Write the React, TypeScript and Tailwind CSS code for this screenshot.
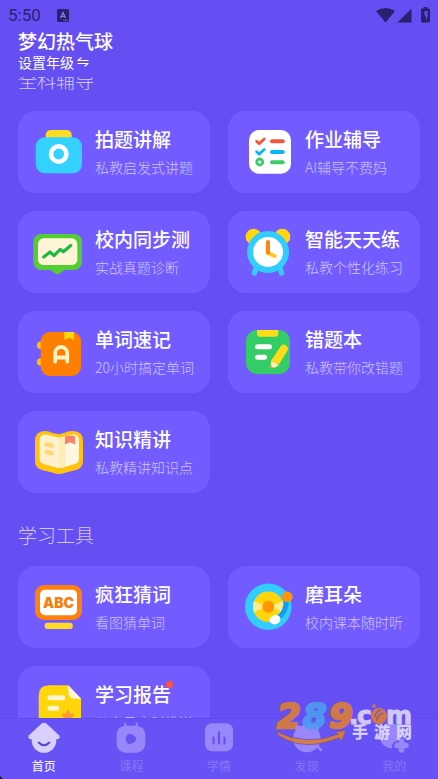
import type { ReactNode } from "react";

type Tool = { title: string; note: string; icon: ReactNode; isNew?: boolean };

function ToolIcon({ children }: { children: ReactNode }) {
  return (
    <svg viewBox="0 0 48 48" className="size-12 shrink-0 overflow-visible" fill="none" strokeLinecap="round" strokeLinejoin="round" aria-hidden="true">
      {children}
    </svg>
  );
}

const camera = (
  <ToolIcon>
    <path d="M11.7 10V7a5 5 0 0 1 5-5h16a5 5 0 0 1 5 5v3z" fill="#ffdb22" />
    <rect x="1.7" y="9.3" width="46.3" height="36" rx="9" fill="#33d2ff" />
    <circle cx="24.7" cy="26" r="7.7" stroke="#fff" strokeWidth="4.6" />
  </ToolIcon>
);

const checklist = (
  <ToolIcon>
    <rect x="5" y="2" width="42" height="43.7" rx="10" fill="#fff" />
    <g strokeWidth="2.8">
      <path d="M12.6 13.2l2.6 2.4 5-4.6" stroke="#f0583c" />
      <path d="M12.6 23.7l2.6 2.4 5-4.6" stroke="#0cb4fc" />
      <circle cx="15.7" cy="34" r="3" stroke="#3ccb6b" />
    </g>
    <g strokeWidth="4">
      <path d="M28 13.3h10.7" stroke="#f0583c" />
      <path d="M28 24h10.7" stroke="#0cb4fc" />
      <path d="M28 34.3h10.7" stroke="#3ccb6b" />
    </g>
  </ToolIcon>
);

const trend = (
  <ToolIcon>
    <path d="M15 41h17l-6.4 4.6q-2 1.5-4 0z" fill="#53cd34" />
    <rect x="-.7" y="6" width="48.7" height="36" rx="8" fill="#53cd34" />
    <rect x="4" y="10.3" width="39.3" height="26.7" rx="5.5" fill="#fff5d6" />
    <path d="M9.7 29l6.3-5 4 3.6 6.3-6.2 3 2.4 7.4-6.3" stroke="#1fb843" strokeWidth="3.2" />
  </ToolIcon>
);

const clock = (
  <ToolIcon>
    <circle cx="9.7" cy="8.7" r="8" fill="#ffd60a" />
    <circle cx="38.3" cy="8.7" r="8" fill="#ffd60a" />
    <path d="M12.7 38.5l-2.3 6.5M35.3 38.5l2.3 6.5" stroke="#33ccff" strokeWidth="5.4" />
    <circle cx="24" cy="24" r="21" fill="#33ccff" />
    <circle cx="24" cy="24" r="15" fill="#fff" />
    <path d="M24 25l6.6 3" stroke="#ffc61a" strokeWidth="4" />
    <path d="M24 14v10.5" stroke="#ff8410" strokeWidth="4" />
  </ToolIcon>
);

const wordBook = (
  <ToolIcon>
    <circle cx="6.7" cy="17.3" r="3.8" fill="#ffc20d" />
    <circle cx="6.7" cy="34" r="3.8" fill="#ffc20d" />
    <rect x="6.7" y="4" width="40.3" height="44" rx="9" fill="#ff7f00" />
    <path d="M30.300 4H40v8l-4.800-2.300-4.900 2.300z" fill="#ffd60a" />
    <path d="M21.200 33.500V25a6 6 0 0 1 12 0v8.500M21.200 29.500h12" stroke="#fff3c4" strokeWidth="3.8" />
  </ToolIcon>
);

const mistakes = (
  <ToolIcon>
    <rect x="2" y="2" width="44" height="44" rx="11" fill="#33cc66" />
    <path d="M13 2h21.300v3.700a3 3 0 0 1-3 3H16a3 3 0 0 1-3-3z" fill="#ffdb1a" />
    <path d="M13.500 18.700h12M13.500 29.300h7" stroke="#fff" strokeWidth="5" />
    <path d="M36.400 18.700q2-3.300 5.300-1.400 3.600 2.200 1.600 5.600L34.500 37l-7.500-4.200z" fill="#ffdb1a" />
    <path d="M27 32.800l7.500 4.200q-2 2.800-7.900 3z" fill="#fff0b8" />
    <path d="M26.700 37.200l2.600 2.400-2.900.8z" fill="#f2933b" />
  </ToolIcon>
);

const openBook = (
  <ToolIcon>
    <path d="M1 13q0-10 10-10 4 0 7 1.800l7.300 1.400 6.700-2Q35 3 39 3q10 0 10 10v20q0 7-7 9l-11 2.800q-6 2.400-12 0L8 42q-7-2-7-9z" fill="#ffc20d" />
    <path d="M5.700 12q0-6 6-5.500l6 1.300 7.600 2V40q-3 0-5-1L9.500 36q-3.800-1-3.800-4.500z" fill="#fff1cc" />
    <path d="M25.300 9.800l7.600-2 6-1.300q6-.5 6 5.500v19.500q0 3.500-3.800 4.500l-10.800 3q-2 1-5 1z" fill="#fff7df" />
    <path d="M25.300 9.800l6-1.600v30.600q-3 1.200-6 1.200z" fill="#ffecb9" />
    <path d="M31 8.300l8-.9q2 0 2 2v7.200l-5-2.400-5 2.400z" fill="#ff8066" />
    <path d="M12.700 16.500l5 1M12.700 24.200l5 1" stroke="#ffd873" strokeWidth="4.4" />
  </ToolIcon>
);

const abc = (
  <ToolIcon>
    <rect x="1" y="2" width="47" height="35" rx="9" fill="#ff800d" />
    <rect x="6" y="6.7" width="37" height="25.6" rx="5" fill="#fff" />
    <text x="24.500" y="25" textAnchor="middle" fill="#f5800f" className="font-[Inter,sans-serif] text-[14px] font-black">ABC</text>
    <rect x="10.7" y="39.7" width="28" height="6.3" rx="2.5" fill="#ffdb22" />
  </ToolIcon>
);

const record = (
  <ToolIcon>
    <circle cx="24.3" cy="23.7" r="23.3" fill="#33ccff" />
    <circle cx="24.3" cy="23.7" r="15.3" fill="#ffd60d" />
    <path d="M24.300 23.700L10 18.300a15.300 15.300 0 0 0 0 10.800zM24.300 23.700l14.300-5.400a15.300 15.300 0 0 1 0 10.800z" fill="#ffec8c" />
    <circle cx="24.3" cy="23.7" r="6" fill="#ff9500" />
    <path d="M42.500 17q-.5 13-8.500 18" stroke="#109dfa" strokeWidth="5" />
    <circle cx="43.3" cy="13.7" r="5.3" fill="#ff9500" />
    <ellipse cx="31" cy="36.7" rx="5.6" ry="4.6" transform="rotate(-20 31 36.7)" fill="#fff" />
  </ToolIcon>
);

const report = (
  <ToolIcon>
    <path d="M15 2.300h19.300L47 15.700V48H4.700V12.600Q4.700 2.300 15 2.300z" fill="#ffd60a" />
    <path d="M34.300 2.300L47 15.700h-6q-6.700 0-6.700-6.700z" fill="#fff5d6" />
    <path d="M16 14.700h12.700M16 25.300h6.700" stroke="#fff5cc" strokeWidth="5" />
    <path d="M34 27.500l1.800 3.500 3.800.6-2.700 2.700.6 3.800-3.500-1.800-3.500 1.800.6-3.800-2.700-2.700 3.800-.6z" fill="#ff9933" stroke="#ff9933" strokeWidth="1.5" />
  </ToolIcon>
);

const tutoring: Tool[] = [
  { title: "拍题讲解", note: "私教启发式讲题", icon: camera },
  { title: "作业辅导", note: "AI辅导不费妈", icon: checklist },
  { title: "校内同步测", note: "实战真题诊断", icon: trend },
  { title: "智能天天练", note: "私教个性化练习", icon: clock },
  { title: "单词速记", note: "20小时搞定单词", icon: wordBook },
  { title: "错题本", note: "私教带你改错题", icon: mistakes },
  { title: "知识精讲", note: "私教精讲知识点", icon: openBook },
];

const learning: Tool[] = [
  { title: "疯狂猜词", note: "看图猜单词", icon: abc },
  { title: "磨耳朵", note: "校内课本随时听", icon: record },
  { title: "学习报告", note: "公众号实时推送", icon: report, isNew: true },
];

function ToolCard({ tool }: { tool: Tool }) {
  return (
    <button type="button" className="flex h-[82px] items-center gap-[13px] rounded-[18px] bg-[#735cff] pl-4 text-left">
      {tool.icon}
      <span className="flex min-w-0 flex-col gap-1 pt-[2px] whitespace-nowrap">
        <span className="relative self-start text-[19px] leading-6 font-medium text-white">
          {tool.title}
          {tool.isNew && <span className="absolute -right-[2px] -top-px size-[7px] rounded-full bg-[#fb533c]" />}
        </span>
        <span className="text-[14px] leading-6 font-light text-[#cdc5ff]">{tool.note}</span>
      </span>
    </button>
  );
}

function ToolSection({ heading, tools }: { heading: string; tools: Tool[] }) {
  return (
    <section>
      <h2 className="mb-[19px] text-[19px] leading-6 font-light text-[#d0c9ff]">{heading}</h2>
      <div className="grid grid-cols-2 gap-[18px]">
        {tools.map((tool) => (
          <ToolCard key={tool.title} tool={tool} />
        ))}
      </div>
    </section>
  );
}

function StatusBar() {
  return (
    <div className="flex h-[30px] shrink-0 items-center text-[#2a2070]">
      <span className="pl-2 font-[Roboto,sans-serif] text-[17px] leading-none">5:50</span>
      <svg viewBox="0 0 12 13" className="ml-4 h-[13px] w-3" aria-hidden="true">
        <rect width="12" height="13" rx="1.5" fill="currentColor" />
        <path d="M3.500 9L6 3.500 8.500 9M4.400 7.300h3.200" fill="none" stroke="#8b7cf5" strokeWidth="1.2" />
        <path d="M6.500 11.300h4" stroke="#8b7cf5" strokeDasharray="1 .6" />
      </svg>
      <svg viewBox="0 0 55 16" className="mr-[7px] ml-auto h-4 w-[55px]" fill="currentColor" aria-hidden="true">
        <path d="M0 4Q9.500-2 19 4L9.500 15.500z" />
        <path d="M35.500 1.500V15.500H21.500z" />
        <path fillRule="evenodd" d="M47.500 0h4v1.500h1.300q1.200 0 1.200 1.200v11.600q0 1.200-1.200 1.200h-6.600q-1.200 0-1.200-1.200V2.700q0-1.200 1.200-1.200h1.300zM48.500 4v4.600H50V13l2.300-5.400h-1.500L52 4z" />
      </svg>
    </div>
  );
}

function NavIcon({ children }: { children: ReactNode }) {
  return (
    <svg viewBox="0 0 32 32" className="size-8" fill="#9886fb" aria-hidden="true">
      {children}
    </svg>
  );
}

const tabs = [
  {
    label: "首页",
    icon: (
      <NavIcon>
        <g fill="#d9d0ff">
          <path d="M13.700 1.500q2.300-1.600 4.600 0L31 13.200q1.700 3.600-2 4.100H3q-3.700-.5-2-4.100z" />
          <circle cx="16" cy="18.5" r="12.3" />
        </g>
        <path d="M10.700 20.500q5.300 5.500 10.600 0" fill="none" stroke="#5746d6" strokeWidth="2" strokeLinecap="round" />
      </NavIcon>
    ),
  },
  {
    label: "课程",
    icon: (
      <NavIcon>
        <path d="M10.300 1.500v4M21.700 1.500v4" stroke="#9886fb" strokeWidth="2" strokeLinecap="round" />
        <rect x="1.6" y="3.7" width="28.7" height="27" rx="9" />
        <path d="M13.500 12.500q5.500.500 7 4.500-1.500 4-7 4.500-4-4.500 0-9z" fill="#6653f0" stroke="#6653f0" strokeWidth="1.5" strokeLinejoin="round" />
      </NavIcon>
    ),
  },
  {
    label: "学情",
    icon: (
      <NavIcon>
        <rect x="2" y="1.3" width="28" height="28" rx="7" />
        <path d="M10.500 15.500v6M16 10v11.500M21.500 15.500v6" stroke="#6653f0" strokeWidth="2.2" strokeLinecap="round" />
      </NavIcon>
    ),
  },
  {
    label: "发现",
    icon: (
      <NavIcon>
        <path d="M3 3l7 1-5 6zM29 3l-7 1 5 6z" />
        <circle cx="15.8" cy="16.5" r="13.7" />
        <path d="M24 22l6 6" stroke="#9886fb" strokeWidth="2.6" strokeLinecap="round" />
      </NavIcon>
    ),
  },
  {
    label: "我的",
    icon: (
      <NavIcon>
        <circle cx="14" cy="14" r="12.3" />
        <path d="M23.500 19v10M18.500 24h10" stroke="#6753f5" strokeWidth="9" strokeLinecap="round" />
        <path d="M23.500 19v9M19 23.500h9" stroke="#9886fb" strokeWidth="5.5" strokeLinecap="round" />
      </NavIcon>
    ),
  },
];

function Watermark() {
  return (
    <svg viewBox="0 0 146 60" className="pointer-events-none absolute right-[22px] bottom-[22px] h-[60px] w-[146px]" aria-hidden="true">
      <g opacity=".9">
        <path d="M6 34Q36 50 68 37l-3-2 11-2-4 11-3-3Q34 55 9 39z" fill="#dc7d35" stroke="#6a4f9e" strokeWidth=".8" />
        <g className="font-['DejaVu_Sans',sans-serif] font-bold" strokeLinejoin="round" strokeWidth="2.5">
          <g className="text-[34px] italic">
            <text x="7" y="31" fill="#dc7d35" stroke="#dc7d35">2</text>
            <text x="33" y="31" fill="#4d9df0" stroke="#4d9df0">8</text>
            <text x="59" y="31" fill="#dc7d35" stroke="#dc7d35">9</text>
          </g>
          <g className="text-[25px]" fill="#ddd4fa" stroke="#ddd4fa" strokeWidth="1">
            <text x="79" y="27">.</text>
            <text x="87" y="27">c</text>
            <text x="116" y="27">m</text>
          </g>
        </g>
        <g fill="none" strokeLinecap="round">
          <circle cx="109" cy="19" r="8" fill="#dc7d35" />
          <circle cx="104" cy="9" r="1.8" fill="#dc7d35" />
          <path d="M107 23q0-5 6-7M105 19q1-5 6-6" stroke="#6b54c4" strokeWidth="1.2" />
        </g>
        <g className="font-['Noto_Sans_CJK_SC',sans-serif] text-[16px] font-black" fill="#e3dcfb">
          <text x="82" y="41">手</text>
          <text x="104" y="41">游</text>
          <text x="126" y="41">网</text>
        </g>
      </g>
    </svg>
  );
}

export default function App() {
  return (
    <div className="relative flex h-screen flex-col overflow-hidden bg-[#654ff3] font-['Noto_Sans_CJK_SC',sans-serif]">
      <StatusBar />
      <header className="flex h-[47px] shrink-0 flex-col items-start px-[18px] text-white">
        <h1 className="text-[19px] leading-[22px] font-medium">梦幻热气球</h1>
        <button type="button" className="flex items-center gap-[3px] text-[14px] leading-5">
          设置年级
          <svg viewBox="0 0 12 10" className="h-[10px] w-3" fill="none" stroke="currentColor" strokeWidth="1.2" strokeLinecap="round" strokeLinejoin="round" aria-hidden="true">
            <path d="M11 3.500H1L4 1M1 6.500h10L8 9" />
          </svg>
        </button>
      </header>
      <main className="min-h-0 flex-1 overflow-hidden px-[18px]">
        <div className="-mt-[9px] flex flex-col gap-[30px]">
          <ToolSection heading="全科辅导" tools={tutoring} />
          <ToolSection heading="学习工具" tools={learning} />
        </div>
      </main>
      <nav className="grid h-[61px] shrink-0 grid-cols-5 border-t border-[#604bea] bg-[#6753f5]">
        {tabs.map((tab, i) => (
          <button
            key={tab.label}
            type="button"
            aria-current={i === 0 ? "page" : undefined}
            className={`flex flex-col items-center gap-1 pt-[3px] text-[12px] leading-4 ${i === 0 ? "font-medium text-[#eeebff]" : "text-[#8673f9]"}`}
          >
            {tab.icon}
            {tab.label}
          </button>
        ))}
      </nav>
      <Watermark />
      <svg viewBox="0 0 4 4" className="absolute bottom-0 left-0 size-1" aria-hidden="true">
        <path d="M0 0q.5 3.500 4 4H0z" fill="#111" />
      </svg>
    </div>
  );
}
